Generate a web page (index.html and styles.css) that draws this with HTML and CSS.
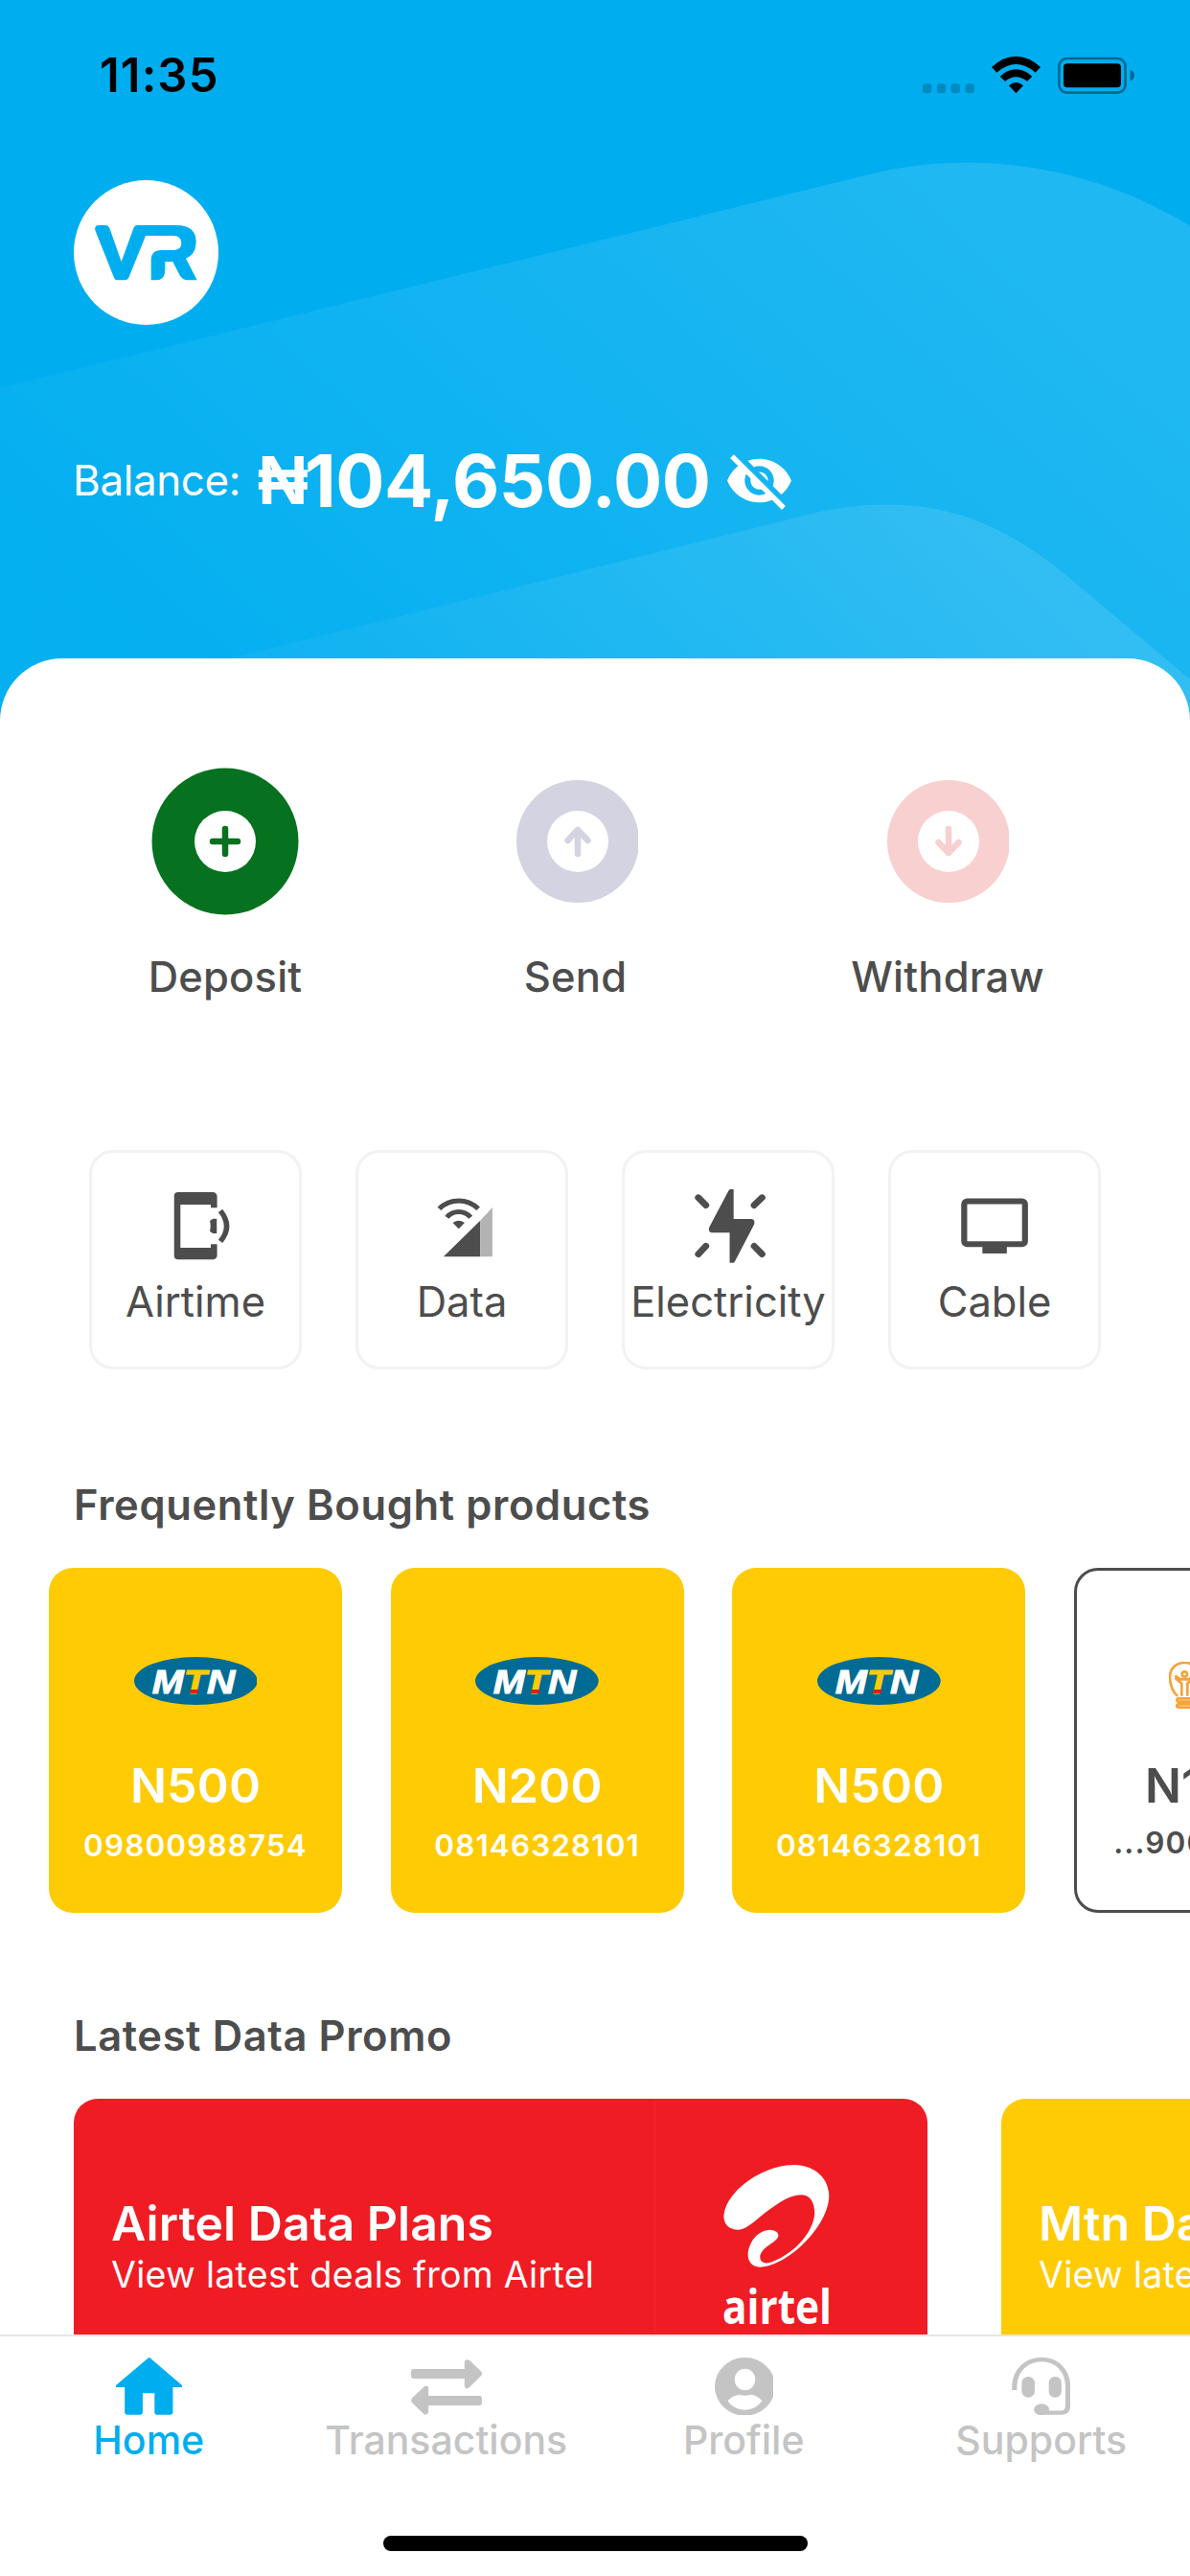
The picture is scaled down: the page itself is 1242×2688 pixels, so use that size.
FILE: index.html
```html
<!DOCTYPE html>
<html lang="en">
<head>
<meta charset="utf-8">
<title>Wallet</title>
<link rel="stylesheet" href="styles.css">
</head>
<body>
<div class="screen">
  <header class="hero">
    <svg class="waves" viewBox="0 0 1242 760">
      <defs>
        <linearGradient id="g1" gradientUnits="userSpaceOnUse" x1="250" y1="760" x2="900" y2="60">
          <stop offset="0" stop-color="#fff" stop-opacity=".02"/>
          <stop offset="1" stop-color="#fff" stop-opacity=".125"/>
        </linearGradient>
        <linearGradient id="g2" gradientUnits="userSpaceOnUse" x1="500" y1="860" x2="960" y2="480">
          <stop offset="0" stop-color="#fff" stop-opacity=".04"/>
          <stop offset="1" stop-color="#fff" stop-opacity=".11"/>
        </linearGradient>
      </defs>
      <path fill="url(#g1)" d="M0 405L911 181C1020 155 1142 174 1242 236V760H0Z"/>
      <path fill="url(#g2)" d="M0 747L847 536C955 512 1030 534 1109 597L1242 709V760H0Z"/>
    </svg>
    <div class="status">
      <span class="time">11:35</span>
      <svg class="status-icons" viewBox="120 50 680 130">
        <g fill="#000" fill-opacity=".2">
          <rect x="128" y="141" width="29" height="30" rx="10"/><rect x="173" y="141" width="29" height="30" rx="10"/>
          <rect x="217" y="141" width="29" height="30" rx="10"/><rect x="262" y="141" width="29" height="30" rx="10"/>
        </g>
        <path d="M345 89Q421 22 498 89L482 106Q421 54 361 106ZM371 118Q421 74 472 118L456 134Q421 106 387 134ZM399 147Q421 127 444 147L421 171Z"/>
        <rect x="556" y="62" width="208" height="107" rx="25" fill="none" stroke="#000" stroke-opacity=".4" stroke-width="8"/>
        <rect x="570" y="78" width="180" height="75" rx="12"/>
        <path fill-opacity=".4" d="M779 98Q792 102 792 115T779 132Z"/>
      </svg>
    </div>
    <svg class="logo" viewBox="52 54 453 453">
      <circle cx="278.500" cy="280.500" r="226.500" fill="#fff"/>
      <path fill="#00aef0" d="M130 195H152Q160 195 164 204L201 309L239 205Q243 195 252 195H374Q435 196 435 247Q434 288 403 299L438 367H410Q392 367 383 350L362 309H338V335Q338 367 308 367H294V305Q294 273 326 273H364Q389 273 389 251Q389 228 364 228H277L225 357Q221 367 212 367H190Q181 367 178 359L119 211Q116 196 130 195Z"/>
    </svg>
    <div class="balance">
      <span class="balance-label">Balance:</span>
      <span class="amount"><span class="naira">₦</span>104,650.00</span>
      <svg class="eye" viewBox="0 0 24 24" fill="#fff"><path d="M12 7c2.760 0 5 2.240 5 5 0 .65-.13 1.260-.36 1.830l2.920 2.920c1.510-1.260 2.700-2.890 3.430-4.750-1.730-4.390-6-7.500-11-7.500-1.400 0-2.740.25-3.980.7l2.160 2.160C10.740 7.130 11.350 7 12 7zM2 4.270l2.280 2.280.46.46C3.080 8.300 1.780 10.020 1 12c1.730 4.390 6 7.500 11 7.500 1.550 0 3.030-.3 4.380-.84l.42.42L19.730 22 21 20.730 3.270 3 2 4.270zM7.530 9.800l1.550 1.550c-.05.21-.08.43-.08.65 0 1.660 1.340 3 3 3 .22 0 .44-.03.65-.08l1.550 1.550c-.67.33-1.410.53-2.200.53-2.760 0-5-2.240-5-5 0-.79.2-1.530.53-2.200zm4.310-.78l3.150 3.150.02-.16c0-1.660-1.340-3-3-3l-.17.01z"/></svg>
    </div>
  </header>

  <main class="sheet">
    <section class="actions">
      <div class="action">
        <svg class="action-icon" viewBox="-77 -77 154 154"><circle r="76.500" fill="#06711f"/><circle r="32" fill="#fff"/><path d="M-13 0H13M0-13V13" stroke="#06711f" stroke-width="6.500" stroke-linecap="round"/></svg>
        <span class="action-label">Deposit</span>
      </div>
      <div class="action action-send">
        <svg class="action-icon small" viewBox="-64 -77 127 154"><circle r="64" fill="#d3d3e1"/><circle r="32" fill="#fff"/><path d="M0 13V-12M-10.500-1L0-12L10.500-1" fill="none" stroke="#d3d3e1" stroke-width="6.500" stroke-linecap="round" stroke-linejoin="round"/></svg>
        <span class="action-label">Send</span>
      </div>
      <div class="action action-withdraw">
        <svg class="action-icon small" viewBox="-64 -77 127 154"><circle r="64" fill="#f8d0cf"/><circle r="32" fill="#fff"/><path d="M0-13V12M-10.500 1L0 12L10.500 1" fill="none" stroke="#f8d0cf" stroke-width="6.500" stroke-linecap="round" stroke-linejoin="round"/></svg>
        <span class="action-label">Withdraw</span>
      </div>
    </section>

    <section class="tiles">
      <div class="tile">
        <svg class="tile-icon" viewBox="243.500 180 232 232" preserveAspectRatio="none" fill="#4d4d4d"><path d="M307 192H412a13 13 0 0 1 13 13V241H406V231H314V366H406V355H425V390a13 13 0 0 1-13 13H307a12 12 0 0 1-12-12V204a12 12 0 0 1 12-12ZM403 282L412 275H424V321H412L403 314Q407 299 403 282Z"/><path d="M435 250Q473 299 435 346" fill="none" stroke="#4d4d4d" stroke-width="16"/></svg>
        <span class="tile-label">Airtime</span>
      </div>
      <div class="tile">
        <svg class="tile-icon" viewBox="1051.400 180 232 232" preserveAspectRatio="none" fill="#4d4d4d"><path d="M1099 244A82 82 0 0 1 1217 244M1122 271A46 46 0 0 1 1194 271" fill="none" stroke="#4d4d4d" stroke-width="15"/><path d="M1140 288Q1158 274 1176 288L1158 307ZM1112 394L1223 281V394Z"/><path d="M1223 281L1260 240V394H1223Z" fill="#b3b3b3"/></svg>
        <span class="tile-label">Data</span>
      </div>
      <div class="tile">
        <svg class="tile-icon" viewBox="261.500 180 232 232" preserveAspectRatio="none" fill="#4d4d4d"><path d="M384 183H394V276H450Q460 279 456 293L397 410Q396 413 392 413H382V319H327Q316 316 320 302L379 187Q381 183 384 183Z"/><path d="M287 209L310 233M480 209L456 233M287 386L310 361M480 386L456 361" stroke="#4d4d4d" stroke-width="20" stroke-linecap="round"/></svg>
        <span class="tile-label">Electricity</span>
      </div>
      <div class="tile">
        <svg class="tile-icon" viewBox="1068.800 180 232 232" preserveAspectRatio="none" fill="#4d4d4d"><rect x="1093" y="220.500" width="184" height="134" rx="9" fill="none" stroke="#4d4d4d" stroke-width="18"/><path d="M1148 356H1222V384H1148Z"/></svg>
        <span class="tile-label">Cable</span>
      </div>
    </section>

    <h2 class="heading">Frequently Bought products</h2>
    <section class="products">
      <div class="product">
        <svg class="mtn" viewBox="398 387 386 150"><ellipse cx="591" cy="462" rx="193" ry="75" fill="#006b94"/><g class="mtn-name"><text x="454" y="500" textLength="99" lengthAdjust="spacingAndGlyphs">M</text><text class="t" x="553" y="500" textLength="72" lengthAdjust="spacingAndGlyphs">T</text><text x="626" y="500" textLength="88" lengthAdjust="spacingAndGlyphs">N</text></g><path d="M575 489H600L597 501H572Z" fill="#e01b22"/></svg>
        <span class="price">N500</span><span class="phone">09800988754</span>
      </div>
      <div class="product">
        <svg class="mtn" viewBox="398 387 386 150"><ellipse cx="591" cy="462" rx="193" ry="75" fill="#006b94"/><g class="mtn-name"><text x="454" y="500" textLength="99" lengthAdjust="spacingAndGlyphs">M</text><text class="t" x="553" y="500" textLength="72" lengthAdjust="spacingAndGlyphs">T</text><text x="626" y="500" textLength="88" lengthAdjust="spacingAndGlyphs">N</text></g><path d="M575 489H600L597 501H572Z" fill="#e01b22"/></svg>
        <span class="price">N200</span><span class="phone">08146328101</span>
      </div>
      <div class="product">
        <svg class="mtn" viewBox="398 387 386 150"><ellipse cx="591" cy="462" rx="193" ry="75" fill="#006b94"/><g class="mtn-name"><text x="454" y="500" textLength="99" lengthAdjust="spacingAndGlyphs">M</text><text class="t" x="553" y="500" textLength="72" lengthAdjust="spacingAndGlyphs">T</text><text x="626" y="500" textLength="88" lengthAdjust="spacingAndGlyphs">N</text></g><path d="M575 489H600L597 501H572Z" fill="#e01b22"/></svg>
        <span class="price">N500</span><span class="phone">08146328101</span>
      </div>
      <div class="product outlined">
        <svg class="bulb" viewBox="1500 402 324 150" fill="none" stroke="#f5a33a" stroke-width="8"><path d="M1528 509C1512 500 1503 470 1503 450C1503 422 1523 405 1549 405S1595 422 1595 450C1595 470 1586 500 1570 509"/><circle cx="1549" cy="441" r="8"/><path d="M1519 446L1537 457H1561L1579 446M1519 452L1540 470V509M1579 452L1558 470V509"/><rect x="1525" y="517" width="48" height="10" rx="5"/><rect x="1525" y="535" width="48" height="10" rx="5"/></svg>
        <span class="price">N1000</span><span class="phone">...900987654</span>
      </div>
    </section>

    <h2 class="heading promo-heading">Latest Data Promo</h2>
    <section class="promos">
      <div class="promo airtel">
        <div class="promo-text"><span class="promo-title">Airtel Data Plans</span><span class="promo-sub">View latest deals from Airtel</span></div>
        <div class="airtel-logo">
          <svg class="swirl" viewBox="921 537 148 322" preserveAspectRatio="none"><path fill="#fff" d="M940 741C926 738 920 715 922 690C926 620 975 537 1020 537C1050 540 1068 580 1068 636C1067 730 1010 855 972 858C955 856 952 820 958 790C963 760 975 742 985 741C996 742 1000 755 996 768C990 785 972 800 972 828C973 845 980 850 990 840C1020 815 1046 750 1048 690C1048 655 1042 632 1030 631C1010 632 992 665 972 700C960 722 950 742 940 741Z"/></svg>
          <svg class="airtel-name" viewBox="0 0 112 48"><text x="-1" y="43" textLength="114" lengthAdjust="spacingAndGlyphs">airtel</text></svg>
        </div>
      </div>
      <div class="promo mtn-promo">
        <div class="promo-text"><span class="promo-title">Mtn Data Plans</span><span class="promo-sub">View latest deals from Mtn</span></div>
      </div>
    </section>
  </main>

  <nav class="tabs">
    <div class="tab active">
      <svg class="tab-icon home" viewBox="303 120 173 180" preserveAspectRatio="none" fill="#00aef0"><path d="M390 119L303 207V213H326V291Q326 299 333 299H367Q373 299 373 292V232H404V292Q404 299 411 299H445Q452 299 452 291V213H476V207Z"/></svg>
      <span class="tab-label">Home</span>
    </div>
    <div class="tab">
      <svg class="tab-icon transfer" viewBox="1085 120 187 180" preserveAspectRatio="none" fill="#c4c4c4"><path d="M1090 156H1226V132Q1230 122 1240 130L1269 163Q1275 171 1269 178L1240 212Q1230 222 1226 210V186H1090Q1085 186 1085 178V164Q1085 156 1090 156ZM1267 240H1131V214Q1126 204 1118 213L1088 247Q1083 255 1088 262L1118 296Q1126 304 1131 292V270H1267Q1272 268 1272 262V248Q1272 240 1267 240Z"/></svg>
      <span class="tab-label">Transactions</span>
    </div>
    <div class="tab">
      <svg class="tab-icon" viewBox="317 120 153 180" preserveAspectRatio="none" fill="#c4c4c4"><ellipse cx="396" cy="211" rx="79" ry="91"/><ellipse cx="396" cy="189" rx="27" ry="34" fill="#fff"/><path fill="#fff" d="M351 256Q362 240 380 236Q396 242 413 236Q430 240 441 256Q424 284 396 284Q368 284 351 256Z"/></svg>
      <span class="tab-label">Profile</span>
    </div>
    <div class="tab">
      <svg class="tab-icon" viewBox="1101 120 153 180" preserveAspectRatio="none" fill="#c4c4c4"><path fill="none" stroke="#c4c4c4" stroke-width="13" d="M1108 222V208C1110 160 1140 126 1179 126C1222 126 1248 165 1248 212V270Q1248 293 1230 293H1180"/><rect x="1127" y="180" width="34" height="65" rx="17" ry="19"/><rect x="1198" y="180" width="33" height="65" rx="16" ry="19"/><ellipse cx="1179" cy="283" rx="20" ry="18"/></svg>
      <span class="tab-label">Supports</span>
    </div>
    <div class="home-bar"></div>
  </nav>
</div>
</body>
</html>
```
FILE: styles.css
```css
* { box-sizing: border-box; }
body { margin: 0; font-family: Inter, "Liberation Sans", sans-serif; color: #4d4d4d; background: #fff; }
svg { display: block; flex: none; }
span { white-space: nowrap; }
.screen { width: 1242px; height: 2688px; display: flex; flex-direction: column; overflow: hidden; }

.hero { position: relative; flex: none; height: 760px; background: #00aef0; padding-top: 49px; }
.waves { position: absolute; inset: 0; width: 1242px; height: 760px; }
.hero > div, .logo { position: relative; }
.status { display: flex; justify-content: space-between; align-items: flex-start; height: 60px; padding: 0 55px 0 104px; }
.time { font-size: 49px; line-height: 60px; font-weight: 600; letter-spacing: 1.100px; color: #000; }
.status-icons { width: 226.700px; height: 43.300px; margin-top: 7.700px; }
.logo { width: 151px; height: 151px; margin: 79px 0 0 77px; }
.balance { display: flex; align-items: center; height: 90px; margin-top: 117px; padding-left: 76px; color: #fff; }
.balance-label { font-size: 44px; line-height: 88px; width: 193px; letter-spacing: -0.400px; }
.amount { font-size: 76px; line-height: 90px; font-weight: 700; width: 487px; display: flex; letter-spacing: -0.500px; }
.naira { font: 700 73px/90px "Liberation Sans", sans-serif; width: 49px; }
.eye { width: 73px; height: 73px; }

.sheet { position: relative; flex: none; height: 1749px; margin-top: -73px; padding-top: 114px; background: #fff; border-radius: 65px 65px 0 0; overflow: hidden; }
.actions { display: grid; grid-template-columns: 162px 128px 200px; justify-content: space-between; padding: 0 153px 0 154px; }
.action { display: flex; flex-direction: column; align-items: center; gap: 37px; }
.action-icon { width: 154px; height: 154px; }
.action-icon.small { width: 127px; }
.action-label { font-size: 43.500px; line-height: 54px; font-weight: 500; letter-spacing: 0.200px; }
.action-send .action-label { padding-right: 4px; }

.tiles { display: flex; gap: 56px; margin: 154px 0 0 93px; }
.tile { width: 222px; height: 229px; border: 3px solid #f2f2f2; border-radius: 25px; padding-top: 37px; display: flex; flex-direction: column; align-items: center; gap: 14px; }
.tile-icon { width: 80px; height: 77.300px; overflow: visible; }
.tile-label { font-size: 43.500px; line-height: 54px; }

.heading { margin: 114px 0 0 77px; font-size: 43.500px; line-height: 54px; font-weight: 600; letter-spacing: 0.600px; }
.products { display: flex; gap: 50.670px; margin: 39px 0 0 51px; }
.product { flex: none; width: 306px; height: 360px; padding-top: 93px; border-radius: 25px; background: #fecb05; color: #fff; display: flex; flex-direction: column; align-items: center; }
.mtn { width: 128.700px; height: 50px; }
.mtn-name { font: italic 700 107px "Liberation Sans", sans-serif; fill: #fff; stroke: #fff; stroke-width: 3px; }
.mtn-name .t { fill: #fecb05; stroke: #fecb05; }
.price { margin-top: 54px; font-size: 50px; line-height: 60px; font-weight: 600; letter-spacing: 0.200px; }
.phone { margin-top: 12px; font-size: 31.500px; line-height: 41px; font-weight: 600; letter-spacing: 1.100px; }
.outlined { background: #fff; border: 3px solid #4d4d4d; color: #4d4d4d; padding-top: 95px; }
.outlined .price { margin-top: 49px; font-weight: 600; letter-spacing: 0; }
.outlined .phone { margin-top: 9px; }
.bulb { width: 108px; height: 50px; }

.promo-heading { margin-top: 101px; }
.promos { display: flex; gap: 77px; margin: 39px 0 0 77px; }
.promo { flex: none; width: 891px; height: 306px; border-radius: 25px; display: flex; color: #fff; }
.promo-text { width: 606px; padding: 100px 0 0 39px; display: flex; flex-direction: column; }
.promo-title { font-size: 50px; line-height: 60px; font-weight: 600; }
.promo-sub { font-size: 37.500px; line-height: 48px; letter-spacing: 0.300px; }
.airtel { background: #ef1c24; }
.mtn-promo { background: #fecb05; }
.airtel-logo { flex: 1; padding: 69px 0 0 71px; border-left: 1px solid #f0272e; }
.swirl { width: 111px; height: 107px; }
.airtel-name { width: 112px; height: 48px; margin-top: 16px; overflow: visible; font: 700 51px "Open Sans", sans-serif; fill: #fff; }

.tabs { position: relative; flex: none; height: 252px; border-top: 2px solid #e5e5e5; background: #fff; padding-top: 22px; display: grid; grid-template-columns: repeat(4, 1fr); grid-template-rows: 111px auto; row-gap: 75px; }
.tab { display: flex; flex-direction: column; align-items: center; gap: 1px; color: #c4c4c4; }
.tab.active { color: #00aef0; }
.tab-icon { width: 61px; height: 60px; }
.home { width: 69px; }
.transfer { width: 74px; }
.tab-label { font-size: 41px; line-height: 50px; font-weight: 500; }
.home-bar { grid-column: 1 / -1; justify-self: center; width: 443px; height: 16px; border-radius: 8px; background: #000; }
```
